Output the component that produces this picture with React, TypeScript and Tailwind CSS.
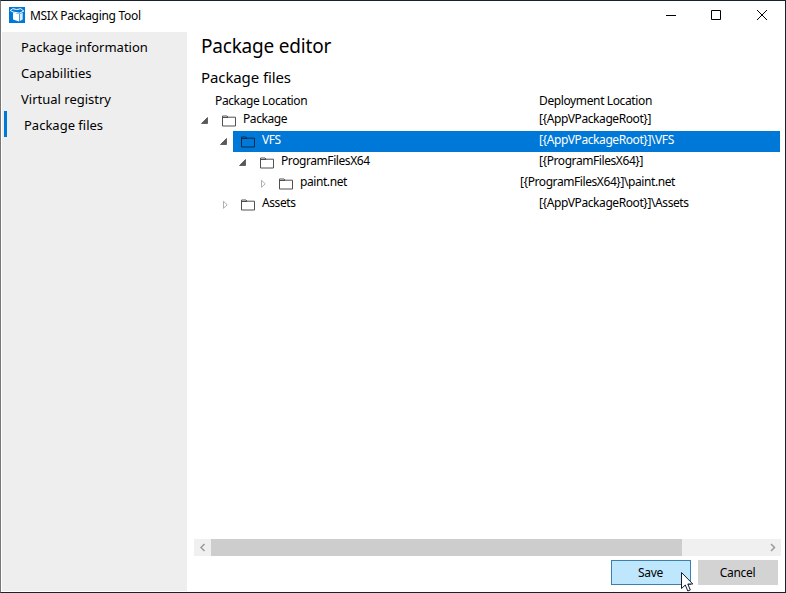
const rows = [
  { name: "Package", location: "[{AppVPackageRoot}]", depth: 0, open: true },
  { name: "VFS", location: "[{AppVPackageRoot}]\\VFS", depth: 1, open: true, selected: true },
  { name: "ProgramFilesX64", location: "[{ProgramFilesX64}]", depth: 2, open: true },
  { name: "paint.net", location: "[{ProgramFilesX64}]\\paint.net", depth: 3, open: false },
  { name: "Assets", location: "[{AppVPackageRoot}]\\Assets", depth: 1, open: false },
];

const indents = ["pl-0", "pl-[19px]", "pl-[38px]", "pl-[57px]"];
const nameWidths = ["w-[296px]", "w-[277px]", "w-[258px]", "w-[220px]"];

// desktop colours that show through the translucent left window edge
const edgeMarks = [
  { y: 73, h: 22, color: "#8a4a1c" },
  { y: 95, h: 8, color: "#4a5570" },
  { y: 184, h: 27, color: "#087a9c" },
  { y: 212, h: 8, color: "#30405f" },
  { y: 232, h: 9, color: "#1c1c50" },
  { y: 250, h: 5, color: "#2b2b2b" },
  { y: 289, h: 3, color: "#8c2a28" },
  { y: 300, h: 13, color: "#8a1f1f" },
  { y: 316, h: 6, color: "#33496f" },
  { y: 339, h: 5, color: "#64482c" },
  { y: 385, h: 41, color: "#7c1b1d" },
  { y: 440, h: 5, color: "#2b2b2b" },
  { y: 491, h: 12, color: "#7c1b1d" },
  { y: 521, h: 8, color: "#33496f" },
  { y: 540, h: 8, color: "#5b7f76" },
];

function AppIcon() {
  return (
    <svg width="16" height="16" viewBox="0 0 16 16">
      <rect width="16" height="16" fill="#0078d7" />
      <path d="M4 5.500l6 1.500v7.500l-6-2z" fill="#fff" />
      <path d="M10.700 7l3-1.300v6.800l-3 1.700z" fill="#d9ecfa" />
      <path d="M4 5L1.200 3.500l2.600-1.800 4 .8 4-.8 3 2.300-4.300 2.200z" fill="none" stroke="#fff" />
    </svg>
  );
}

function Expander({ open }: { open: boolean }) {
  return (
    <svg width="12" height="12" viewBox="0 0 12 12" className="mt-[5px] shrink-0">
      {open ? (
        <path d="M8.500 2.500v6H2.500z" fill="#595959" stroke="#404040" strokeWidth="0.7" />
      ) : (
        <path d="M5.500 2.300v7l3.700-3.500z" fill="none" stroke="#a6a6a6" strokeWidth="0.9" />
      )}
    </svg>
  );
}

function Folder({ selected }: { selected?: boolean }) {
  return (
    <svg
      width="14"
      height="12"
      viewBox="0 0 14 12"
      className="mt-[5px] shrink-0"
      fill="none"
      stroke={selected ? "#062c4c" : "#505050"}
    >
      <path d="M.5 11V1h4.500l1 1.200h7.500V11z" />
      <path d="M1 2.500h5" />
    </svg>
  );
}

export default function App() {
  return (
    <div className="relative flex h-[593px] w-[786px] flex-col overflow-hidden border border-[#17222f] border-l-[#777] bg-white font-['Noto_Sans',sans-serif] text-black">
      <header className="flex h-[31px] shrink-0 items-center pl-2">
        <div className="-mt-[3px]">
          <AppIcon />
        </div>
        <span className="-mt-px ml-[5px] text-[12px] tracking-[-0.3px]">MSIX Packaging Tool</span>
        <svg width="103" height="12" viewBox="0 0 103 12" className="-mt-[3px] mr-[17px] ml-auto" fill="none" stroke="#000">
          <path d="M1 6.500h10M46.500 1.500h9v9h-9z" />
          <path d="M92 1l10 10M102 1L92 11" />
        </svg>
      </header>

      <div className="flex min-h-0 flex-1">
        <nav className="mb-px ml-px w-[185px] shrink-0 bg-[#eee] text-[13px] leading-[26px]">
          <div className="mt-[2px] pl-[19px]">Package information</div>
          <div className="pl-[19px]">Capabilities</div>
          <div className="pl-[19px]">Virtual registry</div>
          <div className="-mt-px ml-[2px] h-[26px] border-l-[3px] border-[#0078d7] pl-[17px] leading-[28px]">
            Package files
          </div>
        </nav>

        <main className="flex min-w-0 flex-1 flex-col pl-[7px]">
          <h1 className="pl-[7px] text-[19px] leading-[28px] tracking-[-0.2px]">Package editor</h1>
          <h2 className="mt-[6px] pl-[7px] text-[15px] leading-[22px] tracking-[-0.1px]">Package files</h2>
          <div className="mt-[4px] flex h-[18px] pl-[21px] text-[12px] leading-[17px] tracking-[-0.38px]">
            <span className="w-[324px]">Package Location</span>
            <span>Deployment Location</span>
          </div>
          <div className="text-[12px] leading-[18px] tracking-[-0.42px]">
            {rows.map((row) => (
              <div key={row.name} className={`flex h-[21px] ${indents[row.depth]}`}>
                <div className="w-[20px] shrink-0 pl-[5px]">
                  <Expander open={row.open} />
                </div>
                <div
                  className={`mr-[5px] flex min-w-0 flex-1 ${
                    row.selected ? "bg-[#0078d7] text-white" : ""
                  }`}
                >
                  <div className="w-[29px] shrink-0 pl-[8px]">
                    <Folder selected={row.selected} />
                  </div>
                  <span className={`shrink-0 ${nameWidths[row.depth]}`}>{row.name}</span>
                  <span>{row.location}</span>
                </div>
              </div>
            ))}
          </div>

          <div className="mt-auto mr-[4px] flex h-[17px] bg-[#f0f0f0]">
            <svg width="17" height="17" viewBox="0 0 17 17" fill="none" stroke="#9b9b9b" strokeWidth="1.5">
              <path d="M10.500 5L7 8.500l3.500 3.500" />
            </svg>
            <div className="w-[471px] bg-[#cdcdcd]" />
            <svg width="17" height="17" viewBox="0 0 17 17" className="ml-auto" fill="none" stroke="#9b9b9b" strokeWidth="1.5">
              <path d="M7 5l3.500 3.500L7 12" />
            </svg>
          </div>
          <div className="mt-[4px] mr-[7px] mb-[7px] flex justify-end gap-[7px] text-[12px] tracking-[-0.3px]">
            <button className="h-[25px] w-[80px] border border-[#3c7fb1] bg-[#bee6fd] pr-px">Save</button>
            <button className="h-[25px] w-[80px] bg-[#d3d3d3] pr-px">Cancel</button>
          </div>
        </main>
      </div>

      <svg width="1" height="593" viewBox="0 0 1 593" className="absolute -top-px -left-px">
        <rect width="1" height="593" fill="#6f6c6e" />
        {edgeMarks.map((mark) => (
          <rect key={mark.y} y={mark.y} width="1" height={mark.h} fill={mark.color} />
        ))}
      </svg>

      <svg width="13" height="20" viewBox="0 0 13 20" className="absolute top-[571px] left-[680px]">
        <path d="M.5.5v16l3.800-3.500 2.500 6 2.500-1-2.500-6h5z" fill="#fff" stroke="#161b2d" />
      </svg>
    </div>
  );
}
